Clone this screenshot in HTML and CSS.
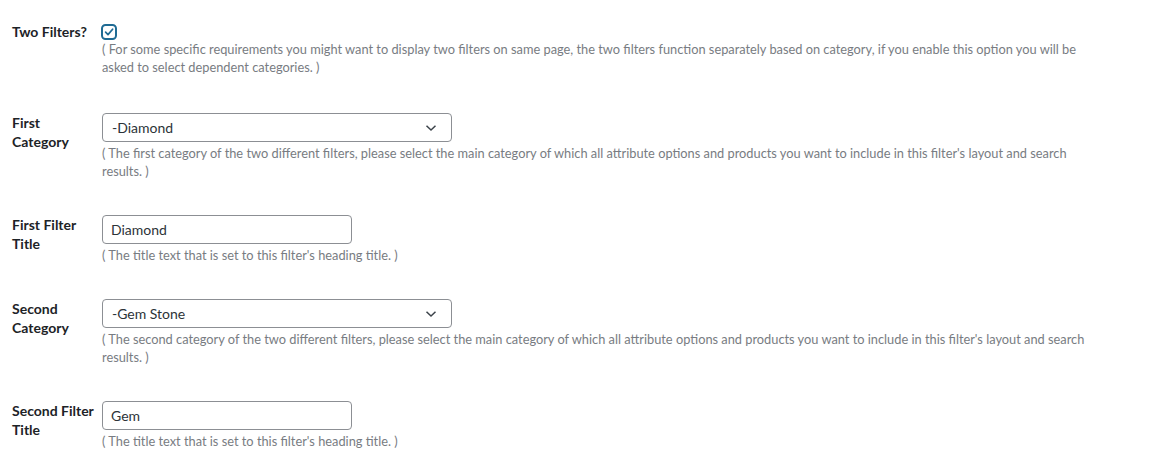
FILE: index.html
```html
<!DOCTYPE html>
<html lang="en">
<head>
<meta charset="utf-8">
<title>Filter settings</title>
<link rel="stylesheet" href="styles.css">
</head>
<body>
<div class="form">
  <div class="row row-check">
    <div class="label">Two Filters?</div>
    <div class="field">
      <span class="checkbox" role="checkbox" aria-checked="true">
        <svg width="16" height="16" viewBox="0 0 16 16"><rect x="1" y="1" width="14" height="14" rx="3.5" fill="#fff" stroke="#1f6b94" stroke-width="2"/><path d="M4.6 8.2 L7 10.6 L11.6 5.2" fill="none" stroke="#1f6b94" stroke-width="1.7" stroke-linecap="round" stroke-linejoin="round"/></svg>
      </span>
      <p class="desc">( For some specific requirements you might want to display two filters on same page, the two filters function separately based on category, if you enable this option you will be asked to select dependent categories. )</p>
    </div>
  </div>
  <div class="row">
    <div class="label">First Category</div>
    <div class="field">
      <div class="select"><span>-Diamond</span><svg class="chev" width="12" height="8" viewBox="0 0 12 8"><path d="M1.5 1.8 L6 6 L10.5 1.8" fill="none" stroke="#3c434a" stroke-width="1.5"/></svg></div>
      <p class="desc">( The first category of the two different filters, please select the main category of which all attribute options and products you want to include in this filter's layout and search results. )</p>
    </div>
  </div>
  <div class="row">
    <div class="label">First Filter Title</div>
    <div class="field">
      <div class="input">Diamond</div>
      <p class="desc">( The title text that is set to this filter's heading title. )</p>
    </div>
  </div>
  <div class="row">
    <div class="label">Second Category</div>
    <div class="field">
      <div class="select"><span>-Gem Stone</span><svg class="chev" width="12" height="8" viewBox="0 0 12 8"><path d="M1.5 1.8 L6 6 L10.5 1.8" fill="none" stroke="#3c434a" stroke-width="1.5"/></svg></div>
      <p class="desc">( The second category of the two different filters, please select the main category of which all attribute options and products you want to include in this filter's layout and search results. )</p>
    </div>
  </div>
  <div class="row">
    <div class="label">Second Filter Title</div>
    <div class="field">
      <div class="input">Gem</div>
      <p class="desc">( The title text that is set to this filter's heading title. )</p>
    </div>
  </div>
</div>
</body>
</html>
```
FILE: styles.css
```css
html, body {
  margin: 0;
  padding: 0;
  background: #fff;
}
body {
  font-family: Lato, "Open Sans", sans-serif;
  color: #1d2327;
}
.form {
  display: flex;
  flex-direction: column;
  padding: 4px 0 0 12px;
}
.row {
  display: grid;
  grid-template-columns: 90px 1000px;
  padding: 18px 0 17px;
}
.row-check {
  padding-bottom: 19px;
}
.label {
  font-size: 14px;
  font-weight: 700;
  line-height: 19px;
  color: #1d2327;
  padding-right: 6px;
}
.field {
  display: flex;
  flex-direction: column;
  align-items: flex-start;
}
.checkbox {
  display: block;
  width: 16px;
  height: 16px;
  margin: 2px 0 0 -1px;
}
.checkbox svg {
  display: block;
}
.desc {
  margin: 0;
  font-size: 12.8px;
  line-height: 18px;
  color: #787c82;
}
.select, .input {
  box-sizing: border-box;
  height: 29px;
  border: 1px solid #8c8f94;
  border-radius: 4px;
  font-size: 14px;
  color: #2c3338;
  display: flex;
  align-items: center;
  margin-bottom: 2px;
}
.select {
  width: 350px;
  padding: 0 14px 0 9px;
  justify-content: space-between;
}
.input {
  width: 250px;
  padding: 0 8px;
}
.chev {
  display: block;
}
```
